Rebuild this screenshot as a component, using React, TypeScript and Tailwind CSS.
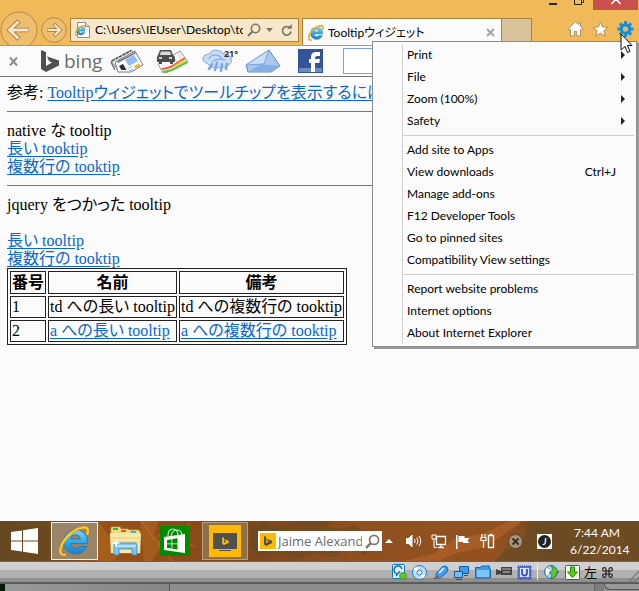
import type { ReactNode } from "react";

const ui = "font-['Lato','Noto_Sans_CJK_JP',sans-serif]";

function IeLogo({ className }: { className: string }) {
  return (
    <svg className={className} viewBox="0 0 32 32" aria-hidden="true">
      <defs>
        <linearGradient id="ieBlue" x1="0" y1="0" x2="0" y2="1">
          <stop offset="0" stopColor="#7fdcfb" />
          <stop offset="0.5" stopColor="#2fa8ea" />
          <stop offset="1" stopColor="#1c7fcd" />
        </linearGradient>
      </defs>
      <path
        d="M17 4a12.500 12.500 0 1 0 11.700 17.200h-7.200a5.500 5.500 0 0 1-9.800-3h17.600C30 9.500 24.500 4 17 4zM11.800 13.400a5.300 5.300 0 0 1 10.400 0z"
        fill="url(#ieBlue)"
        stroke="#1a72b8"
        strokeWidth="0.8"
        fillRule="evenodd"
      />
      <path
        d="M29 9C31 4 29.500 1 25 1.500 16 2.500 5 12 2 22c-1.800 6 .5 9 5 7.500"
        fill="none"
        stroke="#c98a10"
        strokeWidth="3.200"
      />
      <path
        d="M29 9C31 4 29.500 1 25 1.500 16 2.500 5 12 2 22c-1.800 6 .5 9 5 7.500"
        fill="none"
        stroke="#fccb2e"
        strokeWidth="2.200"
      />
    </svg>
  );
}

function BingMark({ className, fill }: { className: string; fill: string }) {
  return (
    <svg className={className} viewBox="0 0 18 22" aria-hidden="true">
      <path d="M0 0l5 2v14l6-3.500-3-1.500-2-4.500 12 4v5L5 22l-5-3z" fill={fill} />
    </svg>
  );
}

function Magnifier({ className }: { className: string }) {
  return (
    <svg className={className} viewBox="0 0 14 14" fill="none" stroke="#7c766c" aria-hidden="true">
      <circle cx="8.500" cy="5.500" r="4.200" strokeWidth="1.600" />
      <path d="M5.500 8.500L1 13" strokeWidth="2.200" />
    </svg>
  );
}

function Header() {
  return (
    <header className="relative h-[46px] overflow-hidden border-b border-[#c6944a] bg-[#f0b959]">
      <div className="flex h-[18px] items-start justify-end">
        <button aria-label="Minimize" className="flex h-2 w-[9px] items-start pt-[3px]">
          <span className="h-[2px] w-2 bg-[#2b2418]" />
        </button>
        <button aria-label="Restore" className="mr-[9px] ml-4 h-[5px] w-[10px]">
          <svg width="10" height="5" viewBox="0 0 10 5" fill="none" stroke="#2b2418">
            <path d="M.5 0v4.500h7V0M7 2.500h2.500V0" />
          </svg>
        </button>
        <button aria-label="Close" className="mr-[1px] flex h-[10px] w-[45px] justify-center bg-[#c9504e]">
          <svg width="10" height="5" viewBox="0 0 10 5" stroke="#fff" strokeWidth="1.600">
            <path d="M5 -1L0.500 4M5 -1l4.500 5" />
          </svg>
        </button>
      </div>
      <div className="flex items-start">
        <div className="-mt-[7px] flex w-[70px] items-center">
          <button aria-label="Back" className="shrink-0">
            <svg width="39" height="38" viewBox="0 0 39 38" fill="none">
              <circle cx="19" cy="19" r="18" fill="#efbe6c" stroke="#b5894b" />
              <path d="M19 10l-9.500 9 9.500 9M10 19h19" stroke="#9c7940" strokeWidth="4.500" />
              <path d="M18.500 10.500L9.500 19l9 8.500M10 19h18.500" stroke="#f8e6c6" strokeWidth="3" />
            </svg>
          </button>
          <button aria-label="Forward" className="ml-[2px] shrink-0">
            <svg width="26" height="26" viewBox="0 0 26 26" fill="none">
              <circle cx="13" cy="13" r="12.300" fill="#efbe6c" stroke="#b5894b" />
              <path d="M13 7l6 6-6 6M19 13H6" stroke="#9c7940" strokeWidth="3.600" />
              <path d="M13.500 7.500l5.500 5.500-5.500 5.500M19 13H6.500" stroke="#f8e6c6" strokeWidth="2.200" />
            </svg>
          </button>
        </div>
        <div className="flex h-6 min-w-0 flex-1 items-center border border-[#a9823f] bg-[#f8e7c8] pl-1">
          <span className="relative h-4 w-4 shrink-0">
            <svg width="16" height="16" viewBox="0 0 16 16" fill="#fff" stroke="#8e8e8e">
              <path d="M2.500.5h8l4 4v11h-12z" />
              <path d="M10.500.5v4h4" fill="#ddd" />
            </svg>
            <IeLogo className="absolute top-[3px] left-0 h-[11px] w-[11px]" />
          </span>
          <input
            aria-label="Address"
            readOnly
            value="C:\Users\IEUser\Desktop\tooltip.html"
            className="ml-1 min-w-0 flex-1 bg-transparent text-[12px] leading-5 text-black outline-none"
          />
          <button aria-label="Search" className="ml-1 shrink-0">
            <Magnifier className="h-[14px] w-[14px]" />
          </button>
          <button aria-label="Show address list" className="ml-[5px] shrink-0">
            <svg width="7" height="4" viewBox="0 0 7 4">
              <path d="M0 0h7L3.500 4z" fill="#7c766c" />
            </svg>
          </button>
          <button aria-label="Refresh" className="mr-[5px] ml-2 shrink-0">
            <svg width="12" height="13" viewBox="0 0 12 13" fill="none" stroke="#7c766c" strokeWidth="1.700">
              <path d="M10 7.500A4.300 4.300 0 1 1 8.500 3.500" />
              <path d="M10.800 0v4.800H6z" fill="#7c766c" stroke="none" />
            </svg>
          </button>
        </div>
        <div className="ml-[3px] flex h-7 w-[200px] items-center border border-b-0 border-[#a9823f] bg-[#fbfbfb] pl-[5px]">
          <IeLogo className="h-4 w-4 shrink-0" />
          <span className="ml-1 flex-1 text-[12px] whitespace-nowrap text-black [font-feature-settings:'palt']">
            Tooltipウィジェット
          </span>
          <button aria-label="Close tab" className="mr-[6px]">
            <svg width="9" height="9" viewBox="0 0 9 9" stroke="#a3a3a3" strokeWidth="2">
              <path d="M1 1l7 7M8 1L1 8" />
            </svg>
          </button>
        </div>
        <button aria-label="New tab" className="h-6 w-[30px] border border-l-0 border-[#a9823f] bg-[#d9c39c]" />
        <div className="mr-[5px] ml-[35px] flex items-center gap-2 pt-[3px]">
          <button aria-label="Home">
            <svg width="17" height="16" viewBox="0 0 17 16" fill="#fff" stroke="#a88958" strokeWidth="0.900">
              <path d="M8.500.7L1 8l1.300 1.300L3.500 8.200V15h3.700v-4.500h2.600V15h3.700V8.200l1.200 1.100L16 8l-2.500-2.500V2h-2v1.600z" />
            </svg>
          </button>
          <button aria-label="Favorites">
            <svg width="17" height="16" viewBox="0 0 17 16" fill="#fff" stroke="#a88958" strokeWidth="0.900">
              <path d="M8.500.8l2 5.200 5.700.3-4.400 3.500 1.500 5.400-4.800-3.100-4.800 3.100 1.500-5.400L.8 6.300 6.500 6z" />
            </svg>
          </button>
          <button aria-label="Tools">
            <svg width="17" height="16" viewBox="0 0 17 16" fill="none" stroke="#158fdc">
              <circle cx="8.500" cy="8" r="4.200" strokeWidth="3.200" />
              <path
                d="M8.500 0v3M8.500 13v3M.5 8h3M13.500 8h3M2.900 2.400L5 4.500M12 11.500l2.100 2.100M14.100 2.400L12 4.500M5 11.500l-2.100 2.100"
                strokeWidth="3"
              />
            </svg>
          </button>
        </div>
      </div>
    </header>
  );
}

function BingBar() {
  return (
    <nav aria-label="Bing Bar" className="flex h-[31px] items-center border-b border-[#777] bg-[#fbfbfb] pl-[9px]">
      <button aria-label="Close Bing Bar">
        <svg width="9" height="9" viewBox="0 0 9 9" stroke="#8b8b8b" strokeWidth="2">
          <path d="M1 .5l7 8M8 .5l-7 8" />
        </svg>
      </button>
      <a href="#bing" className="ml-[23px] flex items-center text-[#6c6c6c]">
        <BingMark className="h-[22px] w-[18px]" fill="#505050" />
        <span className="ml-[5px] w-[37px] font-['Open_Sans',sans-serif] text-[19px] leading-6">bing</span>
      </a>
      <button aria-label="News" className="ml-[9px]">
        <svg width="34" height="24" viewBox="0 0 34 24">
          <path d="M1 12L21 1l8 8-20 13z" fill="#fff" stroke="#7d7d7d" />
          <path d="M2 12L21 2" stroke="#555" strokeWidth="1.500" strokeDasharray="3 1" />
          <path d="M1 13l4 8" stroke="#777" strokeWidth="1.500" />
          <path d="M5 13L25 2l8 14-12 7H8z" fill="#fff" stroke="#6c7d92" />
          <path d="M7 12.500L25 3l.8 1.500L8 14z" fill="#777" />
          <path d="M15 11l9-5 4 6-9 5z" fill="#8fbcf0" />
          <path d="M9 17l4-2 3.500 6h-5z" fill="#262c38" />
          <path d="M24 17l5-2.500 1.500 2.500-5 2.500z" fill="#f7b32b" />
          <path d="M18 19.500l4-2M19 22l4.500-2" stroke="#8db4e0" />
        </svg>
      </button>
      <button aria-label="Traffic" className="ml-[12px]">
        <svg width="33" height="24" viewBox="0 0 33 24">
          <path d="M2 15L24 2l8 11-22 11H7z" fill="#f7f7f7" stroke="#9a9a9a" />
          <path d="M19 10l3 5M22 4l5 9" stroke="#ccc" strokeWidth="1" />
          <path d="M6 20q8-1 12-4l11-7" fill="none" stroke="#ee5a45" strokeWidth="2" />
          <path d="M18 17.500l11-6.500" stroke="#f8cf3b" strokeWidth="1.800" />
          <path d="M7 23q8-1 13-4l11-6" fill="none" stroke="#61c13c" strokeWidth="2.400" />
          <path d="M4 1h11l2 5q2 1 2 3v4h-2v2h-3v-2H6v2H3v-2H1V9q0-2 1-3z" fill="#4d4d4d" />
          <path d="M5 2.500h9L15.200 6H3.800z" fill="#d9d9d9" />
          <path d="M3 9h3M13 9h3" stroke="#fff" strokeWidth="1.600" />
        </svg>
      </button>
      <button aria-label="Weather, 21 degrees" className="ml-[13px] flex items-start">
        <svg width="31" height="24" viewBox="0 0 31 24">
          <path
            d="M5 14Q0 13 1 9t6-4Q10 0 16 1.500T21 5q6-1 8 4t-4 8q-1 2-5 1-3 2-7 0-4 2-8-4z"
            fill="#c8ddf8"
            stroke="#86a8da"
          />
          <path d="M7 10q1-4 6-4t7 4M10 13q5-4 13-2" fill="none" stroke="#8fb2e4" strokeWidth="1.500" />
          <path
            d="M10 15l-3 5M15 14l-2 7M20 15l-1 7M25 15l-1 5"
            stroke="#7ba7e8"
            strokeWidth="2.500"
            strokeLinecap="round"
          />
        </svg>
        <span className="-ml-[10px] w-[16px] font-['Open_Sans',sans-serif] text-[9px] leading-[9px] font-bold text-[#333]">
          21°
        </span>
      </button>
      <button aria-label="Mail" className="ml-[6px]">
        <svg width="36" height="24" viewBox="0 0 36 24">
          <path d="M1 16L24 1l11 16-9 6H3z" fill="#a8c8ef" stroke="#6289c0" />
          <path d="M1 16l18-1L24 1z" fill="#c9def7" stroke="#7fa2d3" />
          <path d="M3 23l13-8 19 2-9 6z" fill="#86b0e4" />
        </svg>
      </button>
      <button aria-label="Facebook" className="ml-[17px]">
        <svg width="25" height="24" viewBox="0 0 25 24">
          <path d="M0 0h25v24H0z" fill="#34549a" />
          <path d="M1 19h23v4H1z" fill="#6f89bf" />
          <path d="M13 23v-9h-2v-4h2V8q0-5 5-5h4v4h-3q-2 0-2 2v1h5l-.7 4H17v9z" fill="#fff" />
        </svg>
      </button>
      <input
        aria-label="Search Bing"
        className="ml-5 h-[26px] min-w-0 flex-1 border border-[#7da2e0] bg-white px-2 text-[12px]"
      />
    </nav>
  );
}

function A({ children }: { children: ReactNode }) {
  return (
    <a href="#" className="text-[#0a66d2] underline underline-offset-2">
      {children}
    </a>
  );
}

function Page() {
  const cell = "border border-[#222] p-px";
  return (
    <main className="flex-1 bg-[#fbfbfb] px-[7px] pt-[7px] font-['Liberation_Serif','Noto_Sans_CJK_JP',serif] text-[16px] leading-[18px] text-black [font-feature-settings:'palt']">
      <p className="whitespace-nowrap">
        参考: <A>Tooltipウィジェットでツールチップを表示するには</A>
      </p>
      <hr className="mt-[9px] mb-[10px] border-[#777]" />
      <p>native な tooltip</p>
      <p>
        <A>長い tooktip</A>
      </p>
      <p>
        <A>複数行の tooktip</A>
      </p>
      <hr className="mt-[9px] mb-[10px] border-[#777]" />
      <p>jquery をつかった tooltip</p>
      <p className="mt-[18px]">
        <A>長い tooltip</A>
      </p>
      <p>
        <A>複数行の tooktip</A>
      </p>
      <table className="border-separate border-spacing-[2px] border border-[#222] whitespace-nowrap">
        <thead className="leading-[19px]">
          <tr>
            <th className={cell}>番号</th>
            <th className={cell}>名前</th>
            <th className={cell}>備考</th>
          </tr>
        </thead>
        <tbody>
          <tr>
            <td className={cell}>1</td>
            <td className={cell}>td への長い tooltip</td>
            <td className={cell}>td への複数行の tooktip</td>
          </tr>
          <tr>
            <td className={cell}>2</td>
            <td className={cell}>
              <A>a への長い tooltip</A>
            </td>
            <td className={cell}>
              <A>a への複数行の tooktip</A>
            </td>
          </tr>
        </tbody>
      </table>
    </main>
  );
}

type Item = { label: string; key?: string; sub?: boolean };

const sections: Item[][] = [
  [
    { label: "Print", sub: true },
    { label: "File", sub: true },
    { label: "Zoom (100%)", sub: true },
    { label: "Safety", sub: true },
  ],
  [
    { label: "Add site to Apps" },
    { label: "View downloads", key: "Ctrl+J" },
    { label: "Manage add-ons" },
    { label: "F12 Developer Tools" },
    { label: "Go to pinned sites" },
    { label: "Compatibility View settings" },
  ],
  [{ label: "Report website problems" }, { label: "Internet options" }, { label: "About Internet Explorer" }],
];

function ToolsMenu() {
  return (
    <div
      role="menu"
      className="absolute top-[41px] right-[2px] w-[265px] border border-[#8c8c8c] bg-[#fbfbfb] py-[2px] pr-[2px] pl-[29px] shadow-[2px_2px_0_#999]"
    >
      <div className="border-l border-[#cfcfcf]">
        {sections.map((items, i) => (
          <div key={i} className={i > 0 ? "mt-[3px] border-t border-[#cfcfcf] pt-[3px]" : ""}>
            {items.map((item) => (
              <button
                key={item.label}
                role="menuitem"
                className="flex h-[22px] w-full items-center pl-1 text-left text-[12px] leading-4 text-black"
              >
                <span className="flex-1">{item.label}</span>
                {item.key && <span className="pr-[18px]">{item.key}</span>}
                {item.sub && (
                  <svg width="4" height="8" viewBox="0 0 4 8" className="mr-[9px]">
                    <path d="M0 0l4 4-4 4z" fill="#222" />
                  </svg>
                )}
              </button>
            ))}
          </div>
        ))}
      </div>
    </div>
  );
}

function Taskbar() {
  return (
    <footer className="relative h-10 overflow-hidden bg-[#6b4a22]">
      <svg className="absolute inset-0 h-full w-full" viewBox="0 0 639 40" preserveAspectRatio="none" aria-hidden="true">
        <defs>
          <linearGradient id="wall">
            <stop offset="0" stopColor="#664820" />
            <stop offset="0.070" stopColor="#6a4820" />
            <stop offset="0.160" stopColor="#97501a" />
            <stop offset="0.280" stopColor="#8f4a18" />
            <stop offset="0.400" stopColor="#7d491d" />
            <stop offset="0.550" stopColor="#8f4f1f" />
            <stop offset="0.780" stopColor="#93511f" />
            <stop offset="0.850" stopColor="#74491f" />
            <stop offset="1" stopColor="#6b4d27" />
          </linearGradient>
        </defs>
        <path d="M0 0h639v40H0z" fill="url(#wall)" />
        <path d="M98 0l10 14 8-6 10 12-12 20H98zM140 0h18l-4 14 8 10-10 16h-8z" fill="#ab641e" opacity="0.700" />
        <path d="M142 0l12 18 18-12-14 16 14 18M190 2l-12 14 18 10" fill="none" stroke="#c47a22" opacity="0.700" />
        <path
          d="M250 8l14-6 16 5 12-7h40l-8 6 20 2 10-4 12 8-10 6 14 4-4 12-20-6-12 8-20-4-16 6-24-6-14 4-10-8z"
          fill="#6b4a22"
          opacity="0.600"
        />
        <path d="M405 40l30-8 20-14 30-6 24-12h14l-20 14-18 12-28 6-20 8z" fill="#b0612a" opacity="0.700" />
        <path d="M530 0h109v40H495l10-12 16-4z" fill="#6a4b24" opacity="0.800" />
        <path d="M600 8h18l8 12-14 8 8 12h-30l4-14z" fill="#755228" opacity="0.500" />
      </svg>
      <div className="relative flex h-full items-center">
        <button aria-label="Start" className="ml-[11px]">
          <svg width="27" height="26" viewBox="0 0 27 26" fill="#fff">
            <path d="M0 4l11-1.600V12.400H0zM12 2.300L27 0v12.400H12zM0 13.400h11v10L0 22zM12 13.400h15V26l-15-2.300z" />
          </svg>
        </button>
        <button
          aria-label="Internet Explorer"
          className="ml-[13px] flex h-[38px] w-[47px] items-center justify-center border border-[#f3eee6] bg-[#988469]"
        >
          <IeLogo className="h-[31px] w-[31px]" />
        </button>
        <button aria-label="File Explorer" className="ml-[11px]">
          <svg width="33" height="30" viewBox="0 0 33 30">
            <path d="M2 2q0-1 1-1h8l1 2h7l1 1h9q2 0 2 2v21H2z" fill="#f0da86" stroke="#c4a344" strokeWidth="0.700" />
            <path d="M4 2h5v2H4z" fill="#35b54a" />
            <path d="M12 4h5v2h-5z" fill="#e8512f" />
            <path d="M22 5h5v2h-5z" fill="#3ba8e6" />
            <path d="M1 7h30l1 1-1 19H2z" fill="#f7e9a8" />
            <path d="M2 12h29M2 16h29" stroke="#e7cf7c" />
            <path d="M5 29V19q0-2 2-2h19q2 0 2 2v10h-5v-6H10v6z" fill="#7fc4ee" stroke="#3e87bd" strokeWidth="0.800" />
            <path d="M6 20h21" stroke="#c9ecfd" strokeWidth="1.500" />
            <path d="M7 12l1 4 4 1-4 1-1 4-1-4-4-1 4-1z" fill="#fff" />
          </svg>
        </button>
        <button aria-label="Store" className="ml-[18px]">
          <svg width="30" height="30" viewBox="0 0 30 30">
            <path d="M0 0h30v30H0z" fill="#008a00" />
            <path d="M8 10Q8 3 13 3t5 7M11 10q1-6 6-6t5 6" fill="none" stroke="#cfe8c9" strokeWidth="1.200" />
            <path d="M4 11l21-3v19L4 24z" fill="#fff" />
            <path d="M7 14l4.500-.7v4.200H7zM12.300 13.100l5.200-.8v5.200h-5.200zM7 18.300h4.500v4.200L7 22zM12.300 18.300h5.200V23.500l-5.200-.8z" fill="#008a00" />
          </svg>
        </button>
        <button
          aria-label="Bing Desktop"
          className="ml-3 flex h-[38px] w-[46px] items-center justify-center border border-[#b99c78] bg-[#8e6f4a]"
        >
          <span className="flex h-8 w-8 flex-col items-center bg-[#ffb900] pt-[8px]">
            <span className="flex h-4 w-6 items-center justify-center bg-[#505050]">
              <BingMark className="h-2 w-[7px]" fill="#ffb900" />
            </span>
            <span className="mt-[1px] h-px w-3 bg-[#505050]" />
          </span>
        </button>
        <label className="ml-[10px] flex h-5 w-[124px] items-center bg-white pl-[2px]">
          <span className="flex h-4 w-4 shrink-0 items-center justify-center bg-[#ffb900]">
            <BingMark className="h-[10px] w-2" fill="#505050" />
          </span>
          <input
            aria-label="Search the web"
            readOnly
            value="Jaime Alexander"
            className="ml-[2px] w-[84px] min-w-0 bg-transparent font-['Open_Sans',sans-serif] text-[13px] leading-5 text-[#6b6b6b] outline-none"
          />
          <Magnifier className="ml-[3px] h-[15px] w-[15px] shrink-0" />
        </label>
        <div className="ml-auto flex items-center pr-[15px]">
          <button aria-label="Show hidden icons">
            <svg width="8" height="4" viewBox="0 0 8 4">
              <path d="M0 4h8L4 0z" fill="#fff" />
            </svg>
          </button>
          <svg className="ml-[13px]" width="16" height="14" viewBox="0 0 16 14" fill="none" stroke="#fff">
            <path d="M.5 4.500h2L6 1v12L2.500 9.500h-2z" fill="#fff" />
            <path d="M8.500 5q1.300 2 0 4M10.800 3.500q2.400 3.500 0 7M13 2q3.500 5 0 10" />
          </svg>
          <svg className="ml-[9px]" width="16" height="15" viewBox="0 0 16 15" fill="none" stroke="#fff">
            <path d="M5.500 2.500h9v8h-9zM7 13.500h6M10 10.500v3" strokeWidth="1.300" />
            <path d="M1 1h4v4H1zM3 5v8.500h3" />
          </svg>
          <svg className="ml-[8px]" width="16" height="15" viewBox="0 0 16 15">
            <path d="M1 1h1.500v14H1zM3.500 2h6v2h5l-2 2.500 2 2.500H8V8H3.500z" fill="#fff" />
          </svg>
          <svg className="ml-[9px]" width="16" height="16" viewBox="0 0 16 16" fill="none" stroke="#fff">
            <path d="M8.500 2.500h5v12h-5zM10 1.500h2" strokeWidth="1.400" />
            <path d="M2 1v3M5 1v3M1 4.500h5v3H1zM3.500 8v7" strokeWidth="1.200" />
          </svg>
          <svg className="ml-3" width="15" height="15" viewBox="0 0 15 15">
            <circle cx="7.500" cy="7.500" r="7" fill="#a89678" stroke="#55432c" />
            <path d="M4.500 4.500l6 6M10.500 4.500l-6 6" stroke="#332c22" strokeWidth="1.800" />
          </svg>
          <span className="ml-[14px] flex h-[15px] w-[15px] items-center justify-center bg-white">
            <span className="flex h-[13px] w-[13px] items-center justify-center rounded-full bg-[#222] text-[9px] leading-[13px] font-bold text-white italic">
              J
            </span>
          </span>
          <time className="ml-[18px] w-[54px] text-center text-[12px] leading-[17px] whitespace-nowrap text-white">
            7:44 AM
            <br />
            6/22/2014
          </time>
        </div>
      </div>
    </footer>
  );
}

function StatusBar() {
  return (
    <div>
      <div className="flex h-[21px] items-center justify-end border-t border-[#666] bg-[linear-gradient(#cfcfcf_0_8px,#b1b1b1_8px_16px,#8f8f8f_16px)]">
        <svg width="15" height="16" viewBox="0 0 15 16">
          <rect x="0.500" y="0.500" width="12" height="14" rx="1" fill="#e4f2fd" stroke="#1272c4" />
          <path d="M10 5a4 4 0 1 0-4 5M4 12l4-5" fill="none" stroke="#1272c4" strokeWidth="1.500" />
          <circle cx="11" cy="12" r="3.500" fill="#5fc62c" stroke="#3a8a1c" strokeWidth="0.700" />
        </svg>
        <svg className="ml-[5px]" width="15" height="15" viewBox="0 0 15 15">
          <circle cx="7.500" cy="7.500" r="7" fill="#bfe0fa" stroke="#1a75c8" />
          <path d="M7.500 7.500L1.500 4.500A7 7 0 0 1 5 1.500z" fill="#fff" />
          <path d="M7.500 7.500l6 3a7 7 0 0 1-3.500 3z" fill="#fff" />
          <circle cx="7.500" cy="7.500" r="2.500" fill="#fff" stroke="#1a75c8" />
        </svg>
        <svg className="ml-[6px]" width="16" height="15" viewBox="0 0 16 15">
          <path d="M3 9l6-7q3-2 5 0t0 5l-7 6H4z" fill="#3ba1f2" stroke="#1564b4" />
          <path d="M6 8l5-5" stroke="#c5e5fd" strokeWidth="2" />
          <path d="M0 14l4-4 2 2-3 2z" fill="#666" />
        </svg>
        <svg className="ml-[5px]" width="15" height="15" viewBox="0 0 15 15" stroke="#1657a4">
          <path d="M5.500 1.500h9v7h-9z" fill="#3d9cf0" />
          <path d="M.5 6.500h8v6h-8z" fill="#6cc0ff" />
          <path d="M2 14.500h6M10 10.500h4" />
        </svg>
        <svg className="ml-[6px]" width="16" height="14" viewBox="0 0 16 14">
          <path d="M.5 2.500h5l1-1.500h8v3h1v9H.5z" fill="#3b9df0" stroke="#1467ba" />
          <path d="M2 5h12v7H2z" fill="#7cc5fb" />
        </svg>
        <svg className="ml-[5px]" width="16" height="12" viewBox="0 0 16 12">
          <path d="M5 1h11v8H5zM0 3l5 2v3L0 9z" fill="#444" />
          <path d="M6 3h9" stroke="#bbb" />
          <path d="M7 6h7" stroke="#888" strokeWidth="2" />
        </svg>
        <svg className="ml-[5px]" width="15" height="15" viewBox="0 0 15 15">
          <path d="M1 1h13v13H1z" fill="#5572d8" stroke="#2943a9" strokeDasharray="1 1" />
          <path d="M3 3h9v9H3z" fill="#dbe5ff" />
          <path d="M5 4v4q0 2.500 2.500 2.500T10 8V4" fill="none" stroke="#3651bd" strokeWidth="1.800" />
        </svg>
        <span className="ml-[5px] h-4 w-px bg-[#eee]" />
        <svg className="ml-[6px]" width="16" height="16" viewBox="0 0 16 16">
          <circle cx="7" cy="8" r="6.500" fill="#9fd2f5" stroke="#2b75b5" />
          <path d="M2 4l4 2-1 4-3 1" fill="#fff" />
          <path d="M7 1l8 7-3 .5V12l-5 3 1-5-3-1 4-3z" fill="#67c832" stroke="#2b7f18" strokeWidth="0.800" />
        </svg>
        <svg className="ml-[5px]" width="15" height="15" viewBox="0 0 15 15">
          <rect x="0.500" y="0.500" width="14" height="14" rx="1" fill="#f1f5ec" stroke="#4d5f46" />
          <path d="M5.500 2h4v5H12.500l-5 5.500-5-5.500h3z" fill="#5ecb14" stroke="#2f8a0c" />
        </svg>
        <span className="ml-1 text-[13px] leading-4 text-black">左</span>
        <svg className="ml-[5px]" width="11" height="11" viewBox="0 0 11 11" fill="none" stroke="#222" strokeWidth="1.200">
          <path d="M4 4V2.300A1.700 1.700 0 1 0 2.300 4h6.400A1.700 1.700 0 1 0 7 2.300v6.400A1.700 1.700 0 1 0 8.700 7H2.300A1.700 1.700 0 1 0 4 8.700z" />
        </svg>
        <svg className="ml-[16px] self-end" width="10" height="12" viewBox="0 0 10 12" stroke="#777" strokeWidth="1.200">
          <path d="M0 12L10 1M5 12l5-5" />
        </svg>
      </div>
      <div className="flex h-[9px] border-t-2 border-[#5b5b5b] bg-[#8e8e8e]">
        <span className="w-[5px] bg-[#07190a]" />
        <span className="w-[165px] border-r border-[#555] bg-[linear-gradient(90deg,#999,#858585)]" />
        <span className="ml-auto w-[10px] border-l border-[#666] bg-[#7d7d7d]" />
        <span className="h-[6px] w-[35px] rounded-bl-lg border-b border-l border-[#555] bg-[#999]" />
      </div>
    </div>
  );
}

export default function App() {
  return (
    <div className={`relative flex min-h-screen flex-col overflow-hidden bg-[#fbfbfb] ${ui}`}>
      <Header />
      <BingBar />
      <Page />
      <Taskbar />
      <StatusBar />
      <ToolsMenu />
      <svg className="absolute top-[33px] right-[6px]" width="13" height="21" viewBox="0 0 13 21" aria-hidden="true">
        <path d="M1 1v16l4-3.500 2.500 6 2.500-1L7.500 12.500H12z" fill="#fff" stroke="#111" />
      </svg>
    </div>
  );
}
